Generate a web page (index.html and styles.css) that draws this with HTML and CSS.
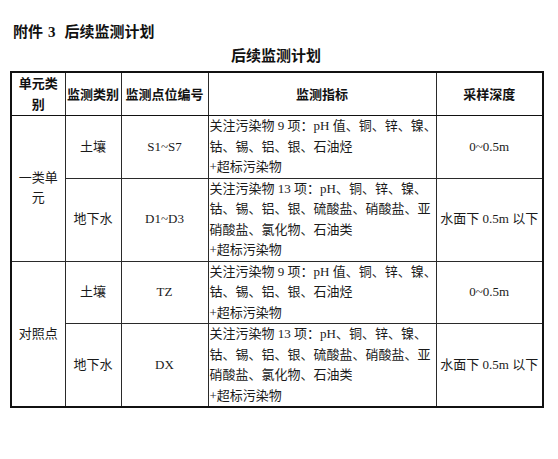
FILE: index.html
```html
<!DOCTYPE html>
<html lang="zh-CN">
<head>
<meta charset="utf-8">
<title>后续监测计划</title>
<link rel="stylesheet" href="styles.css">
</head>
<body>
<div class="page">
  <h1 class="annex">附件<span class="num">3</span><span class="title">后续监测计划</span></h1>
  <div class="caption">后续监测计划</div>
  <table class="plan">
    <colgroup>
      <col class="c1"><col class="c2"><col class="c3"><col class="c4"><col class="c5">
    </colgroup>
    <thead>
      <tr class="head">
        <th>单元类<br>别</th>
        <th>监测类别</th>
        <th>监测点位编号</th>
        <th>监测指标</th>
        <th>采样深度</th>
      </tr>
    </thead>
    <tbody>
      <tr class="r3">
        <td class="grp" rowspan="2">一类单<br>元</td>
        <td class="ctr">土壤</td>
        <td class="ctr">S1~S7</td>
        <td class="ind">关注污染物 9 项：pH 值、铜、锌、镍、<br>钴、锡、铝、银、石油烃<br>+超标污染物</td>
        <td class="ctr">0~0.5m</td>
      </tr>
      <tr class="r4">
        <td class="ctr">地下水</td>
        <td class="ctr">D1~D3</td>
        <td class="ind">关注污染物 13 项：pH、铜、锌、镍、<br>钴、锡、铝、银、硫酸盐、硝酸盐、亚<br>硝酸盐、氯化物、石油类<br>+超标污染物</td>
        <td class="ctr">水面下 0.5m 以下</td>
      </tr>
      <tr class="r3 sep">
        <td class="grp" rowspan="2">对照点</td>
        <td class="ctr">土壤</td>
        <td class="ctr">TZ</td>
        <td class="ind">关注污染物 9 项：pH 值、铜、锌、镍、<br>钴、锡、铝、银、石油烃<br>+超标污染物</td>
        <td class="ctr">0~0.5m</td>
      </tr>
      <tr class="r4">
        <td class="ctr">地下水</td>
        <td class="ctr">DX</td>
        <td class="ind">关注污染物 13 项：pH、铜、锌、镍、<br>钴、锡、铝、银、硫酸盐、硝酸盐、亚<br>硝酸盐、氯化物、石油类<br>+超标污染物</td>
        <td class="ctr">水面下 0.5m 以下</td>
      </tr>
    </tbody>
  </table>
</div>
</body>
</html>
```

FILE: styles.css
```css
html, body {
  margin: 0;
  padding: 0;
  background: #ffffff;
}

body {
  width: 558px;
  height: 459px;
  overflow: hidden;
  color: #1a1a1a;
  font-family: "Liberation Serif", "Noto Sans CJK SC", serif;
}

.page {
  padding: 22px 16px 0 10px;
}

.annex {
  margin: 0 0 0 3px;
  font-size: 15px;
  line-height: 20px;
  font-weight: 700;
  color: #111;
  white-space: nowrap;
}

.annex .num {
  margin-left: 5px;
  margin-right: 9px;
}

.caption {
  margin-top: 4px;
  text-align: center;
  font-size: 15px;
  line-height: 20px;
  font-weight: 700;
  color: #111;
}

.plan {
  margin-top: 5px;
  width: 532px;
  table-layout: fixed;
  border-collapse: collapse;
  border: 2px solid #111;
  font-size: 13px;
  line-height: 20.5px;
}

.c1 { width: 54px; }
.c2 { width: 56px; }
.c3 { width: 87px; }
.c4 { width: 228px; }
.c5 { width: 107px; }

.plan th,
.plan td {
  border: 1px solid #2a2a2a;
  padding: 0 1px;
  vertical-align: middle;
  white-space: nowrap;
  overflow: hidden;
}

.plan th {
  font-weight: 700;
  text-align: center;
  color: #111;
  line-height: 21px;
  height: 42px;
  border-bottom: 1px solid #111;
}

.plan td.ctr,
.plan td.grp {
  text-align: center;
}

.plan td.ind {
  text-align: left;
}

.plan td:last-child {
  padding: 0;
}

.r3 td { height: 61px; }
.r4 td { height: 82px; }
.sep td { border-top: 1.5px solid #111; }
```
